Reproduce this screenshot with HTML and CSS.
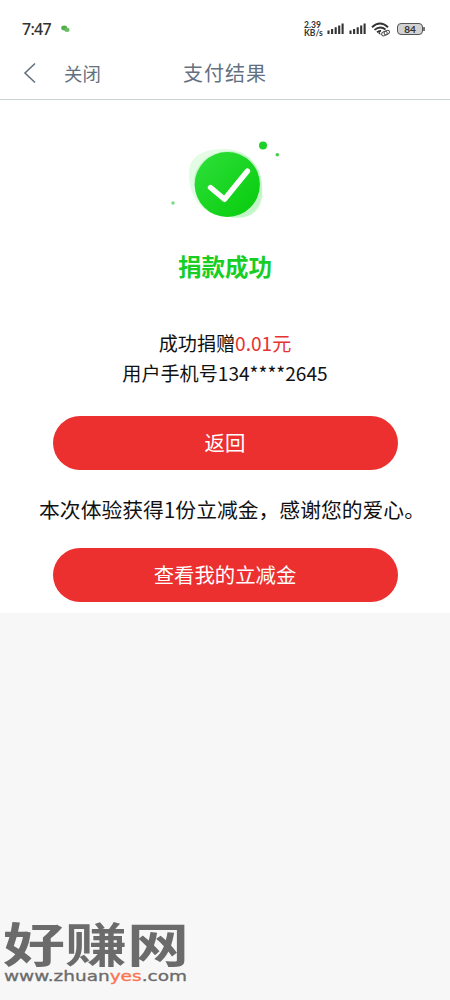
FILE: index.html
```html
<!DOCTYPE html>
<html lang="zh-CN">
<head>
    <meta charset="UTF-8">
    <meta name="viewport" content="width=device-width, initial-scale=1.0">
    <title>支付结果</title>
    <link rel="stylesheet" href="styles.css">
</head>
<body>
    <div class="page">
        <!-- 状态栏 -->
        <div class="status">
            <span class="time">7:47</span>
            <svg class="wechat" width="9" height="8" viewBox="0 0 9 8">
                <ellipse cx="3.2" cy="3" rx="3" ry="2.4" fill="#55ad50"/>
                <ellipse cx="6" cy="4.9" rx="2.6" ry="2.1" fill="#69bd61"/>
            </svg>
            <div class="speed"><span>2.39</span><span>KB/s</span></div>
            <svg class="signal" width="17" height="12" viewBox="0 0 17 12">
                <path d="M1.5 7.5v3.5M5.1 6v5M8.7 4.2v6.8M12.2 2.4v8.6M15.6 .5v10.5" stroke="#333" stroke-width="2.1"/>
            </svg>
            <svg class="signal" width="17" height="12" viewBox="0 0 17 12">
                <path d="M1.5 7.5v3.5M5.1 6v5M8.7 4.2v6.8M12.2 2.4v8.6M15.6 .5v10.5" stroke="#333" stroke-width="2.1"/>
            </svg>
            <svg class="wifi" width="20" height="15" viewBox="0 0 20 15">
                <path d="M1 5.2Q9 -2 17 5.2M3.5 7.9Q9 3.2 14.5 7.4M6 10.3Q8 8.6 10 9" fill="none" stroke="#333" stroke-width="1.9"/>
                <path d="M7 11l2-1 .5 3z" fill="#333"/>
                <g fill="none" stroke="#555" stroke-width="1">
                    <ellipse cx="13.4" cy="11.6" rx="2.9" ry="2" transform="rotate(-25 13.4 11.6)"/>
                    <ellipse cx="15.8" cy="10.5" rx="2.8" ry="1.9" transform="rotate(-25 15.8 10.5)"/>
                </g>
            </svg>
            <div class="battery">84</div>
        </div>

        <!-- 导航栏 -->
        <div class="nav">
            <svg class="back" width="14" height="22" viewBox="0 0 14 22">
                <path d="M12 1.5L2 11l10 9.5" fill="none" stroke="#63717f" stroke-width="1.6"/>
            </svg>
            <span class="close">关闭</span>
            <span class="title">支付结果</span>
        </div>

        <!-- 支付结果 -->
        <div class="result">
            <svg class="success" width="120" height="90" viewBox="0 0 120 90">
                <defs>
                    <linearGradient id="green" x1="0" y1="0" x2="1" y2="1">
                        <stop offset="0" stop-color="#2fe03b"/>
                        <stop offset="1" stop-color="#06cb0b"/>
                    </linearGradient>
                </defs>
                <path d="M24 37C25 18 43 14 60 14C79 14 96 27 97 49C99 67 94 79 81 82C65 84 43 82 33 68C27 60 23 48 24 37z" fill="#e4fbe5"/>
                <path d="M28.5 46C31 22 56 12 75 18C93 25 98 43 97 61C95 74 86 82 74 82.5C52 83 30 72 28.5 46z" fill="#c4f5c8"/>
                <circle cx="62.3" cy="49.5" r="32.6" fill="url(#green)"/>
                <path d="M45.5 52.5l14 11.8L82.5 36" fill="none" stroke="#fff" stroke-width="5.4" stroke-linecap="round" stroke-linejoin="round"/>
                <circle cx="98" cy="10.5" r="4" fill="#1cd228"/>
                <circle cx="112.3" cy="19.7" r="1.8" fill="#45ce50"/>
                <circle cx="8" cy="68" r="1.7" fill="#75dc80"/>
            </svg>
            <h1>捐款成功</h1>
            <p class="info">成功捐赠<span class="money">0.01元</span></p>
            <p class="info">用户手机号134****2645</p>
            <a class="btn">返回</a>
            <p class="tip">本次体验获得1份立减金，感谢您的爱心。</p>
            <a class="btn">查看我的立减金</a>
        </div>

        <!-- 水印 -->
        <svg class="watermark" width="190" height="90" viewBox="0 0 190 90">
            <text class="site" x="3" y="52" textLength="186" lengthAdjust="spacingAndGlyphs">好赚网</text>
            <text class="url" x="4" y="71" textLength="183" lengthAdjust="spacingAndGlyphs">www.zhuan<tspan class="yes">yes</tspan>.com</text>
        </svg>
    </div>
</body>
</html>
```
FILE: styles.css
```css
* {
    margin: 0;
    padding: 0;
    box-sizing: border-box;
}
body {
    background-color: #f7f7f7;
    font-family: "Noto Sans CJK SC", sans-serif;
}
.page {
    display: flex;
    flex-direction: column;
    width: 450px;
    height: 1000px;
    overflow: hidden;
}

/* 状态栏 */
.status {
    display: flex;
    align-items: center;
    height: 48px;
    padding: 10px 27px 0 22px;
    background-color: #fff;
    color: #333;
}
.time {
    width: 39px;
    font: 500 16px/20px "Noto Sans", sans-serif;
    letter-spacing: -0.7px;
}
.speed {
    display: flex;
    flex-direction: column;
    width: 20px;
    margin-left: auto;
    margin-right: 3px;
    font: 700 8.5px/8px Lato, sans-serif;
}
.signal {
    margin-right: 5px;
}
.wifi {
    margin-right: 6px;
}
.battery {
    position: relative;
    width: 26px;
    height: 12px;
    border: 1px solid #555;
    border-radius: 4px;
    background-color: #d2d2d2;
    font: 700 10px/10px Lato, sans-serif;
    text-align: center;
}
.battery::after {
    content: '';
    position: absolute;
    top: 3px;
    right: -3px;
    width: 2px;
    height: 4px;
    background-color: #777;
}

/* 导航栏 */
.nav {
    display: grid;
    grid-template-columns: 41px 90px 1fr 154px;
    align-items: center;
    height: 52px;
    padding: 0 0 2px 23px;
    border-bottom: 1px solid #ccd3d5;
    background-color: #fff;
    color: #63717f;
}
.close {
    font-size: 18.4px;
}
.title {
    padding-left: 29px;
    font-size: 20px;
    letter-spacing: 1px;
    white-space: nowrap;
}

/* 支付结果 */
.result {
    display: flex;
    flex-direction: column;
    align-items: center;
    height: 513px;
    padding-top: 35px;
    background-color: #fff;
    color: #111;
}
.success {
    margin-right: 1px;
}
.result h1 {
    margin: 23px 0 44px;
    color: #18ce25;
    font-size: 23.5px;
    font-weight: 700;
    line-height: 36px;
}
.info {
    font-size: 19.1px;
    line-height: 30px;
}
.money {
    color: #e63232;
}
.btn {
    flex: none;
    width: 345px;
    height: 54px;
    margin-top: 27.5px;
    border-radius: 27px;
    background-color: #ec3030;
    color: #fff;
    font-size: 20.4px;
    line-height: 52px;
    text-align: center;
}
.tip {
    margin: 24px 0 -3px;
    padding-left: 14px;
    font-size: 20.8px;
    line-height: 30px;
    white-space: nowrap;
}

/* 水印 */
.watermark {
    margin-top: auto;
}
.site {
    fill: #6b6b6b;
    font-size: 47px;
    font-weight: 700;
}
.url {
    fill: #6b6b6b;
    stroke: #6b6b6b;
    stroke-width: .3px;
    font: 400 14px "DejaVu Sans", sans-serif;
}
.yes {
    fill: #fa7350;
    stroke: #fa7350;
}
```
